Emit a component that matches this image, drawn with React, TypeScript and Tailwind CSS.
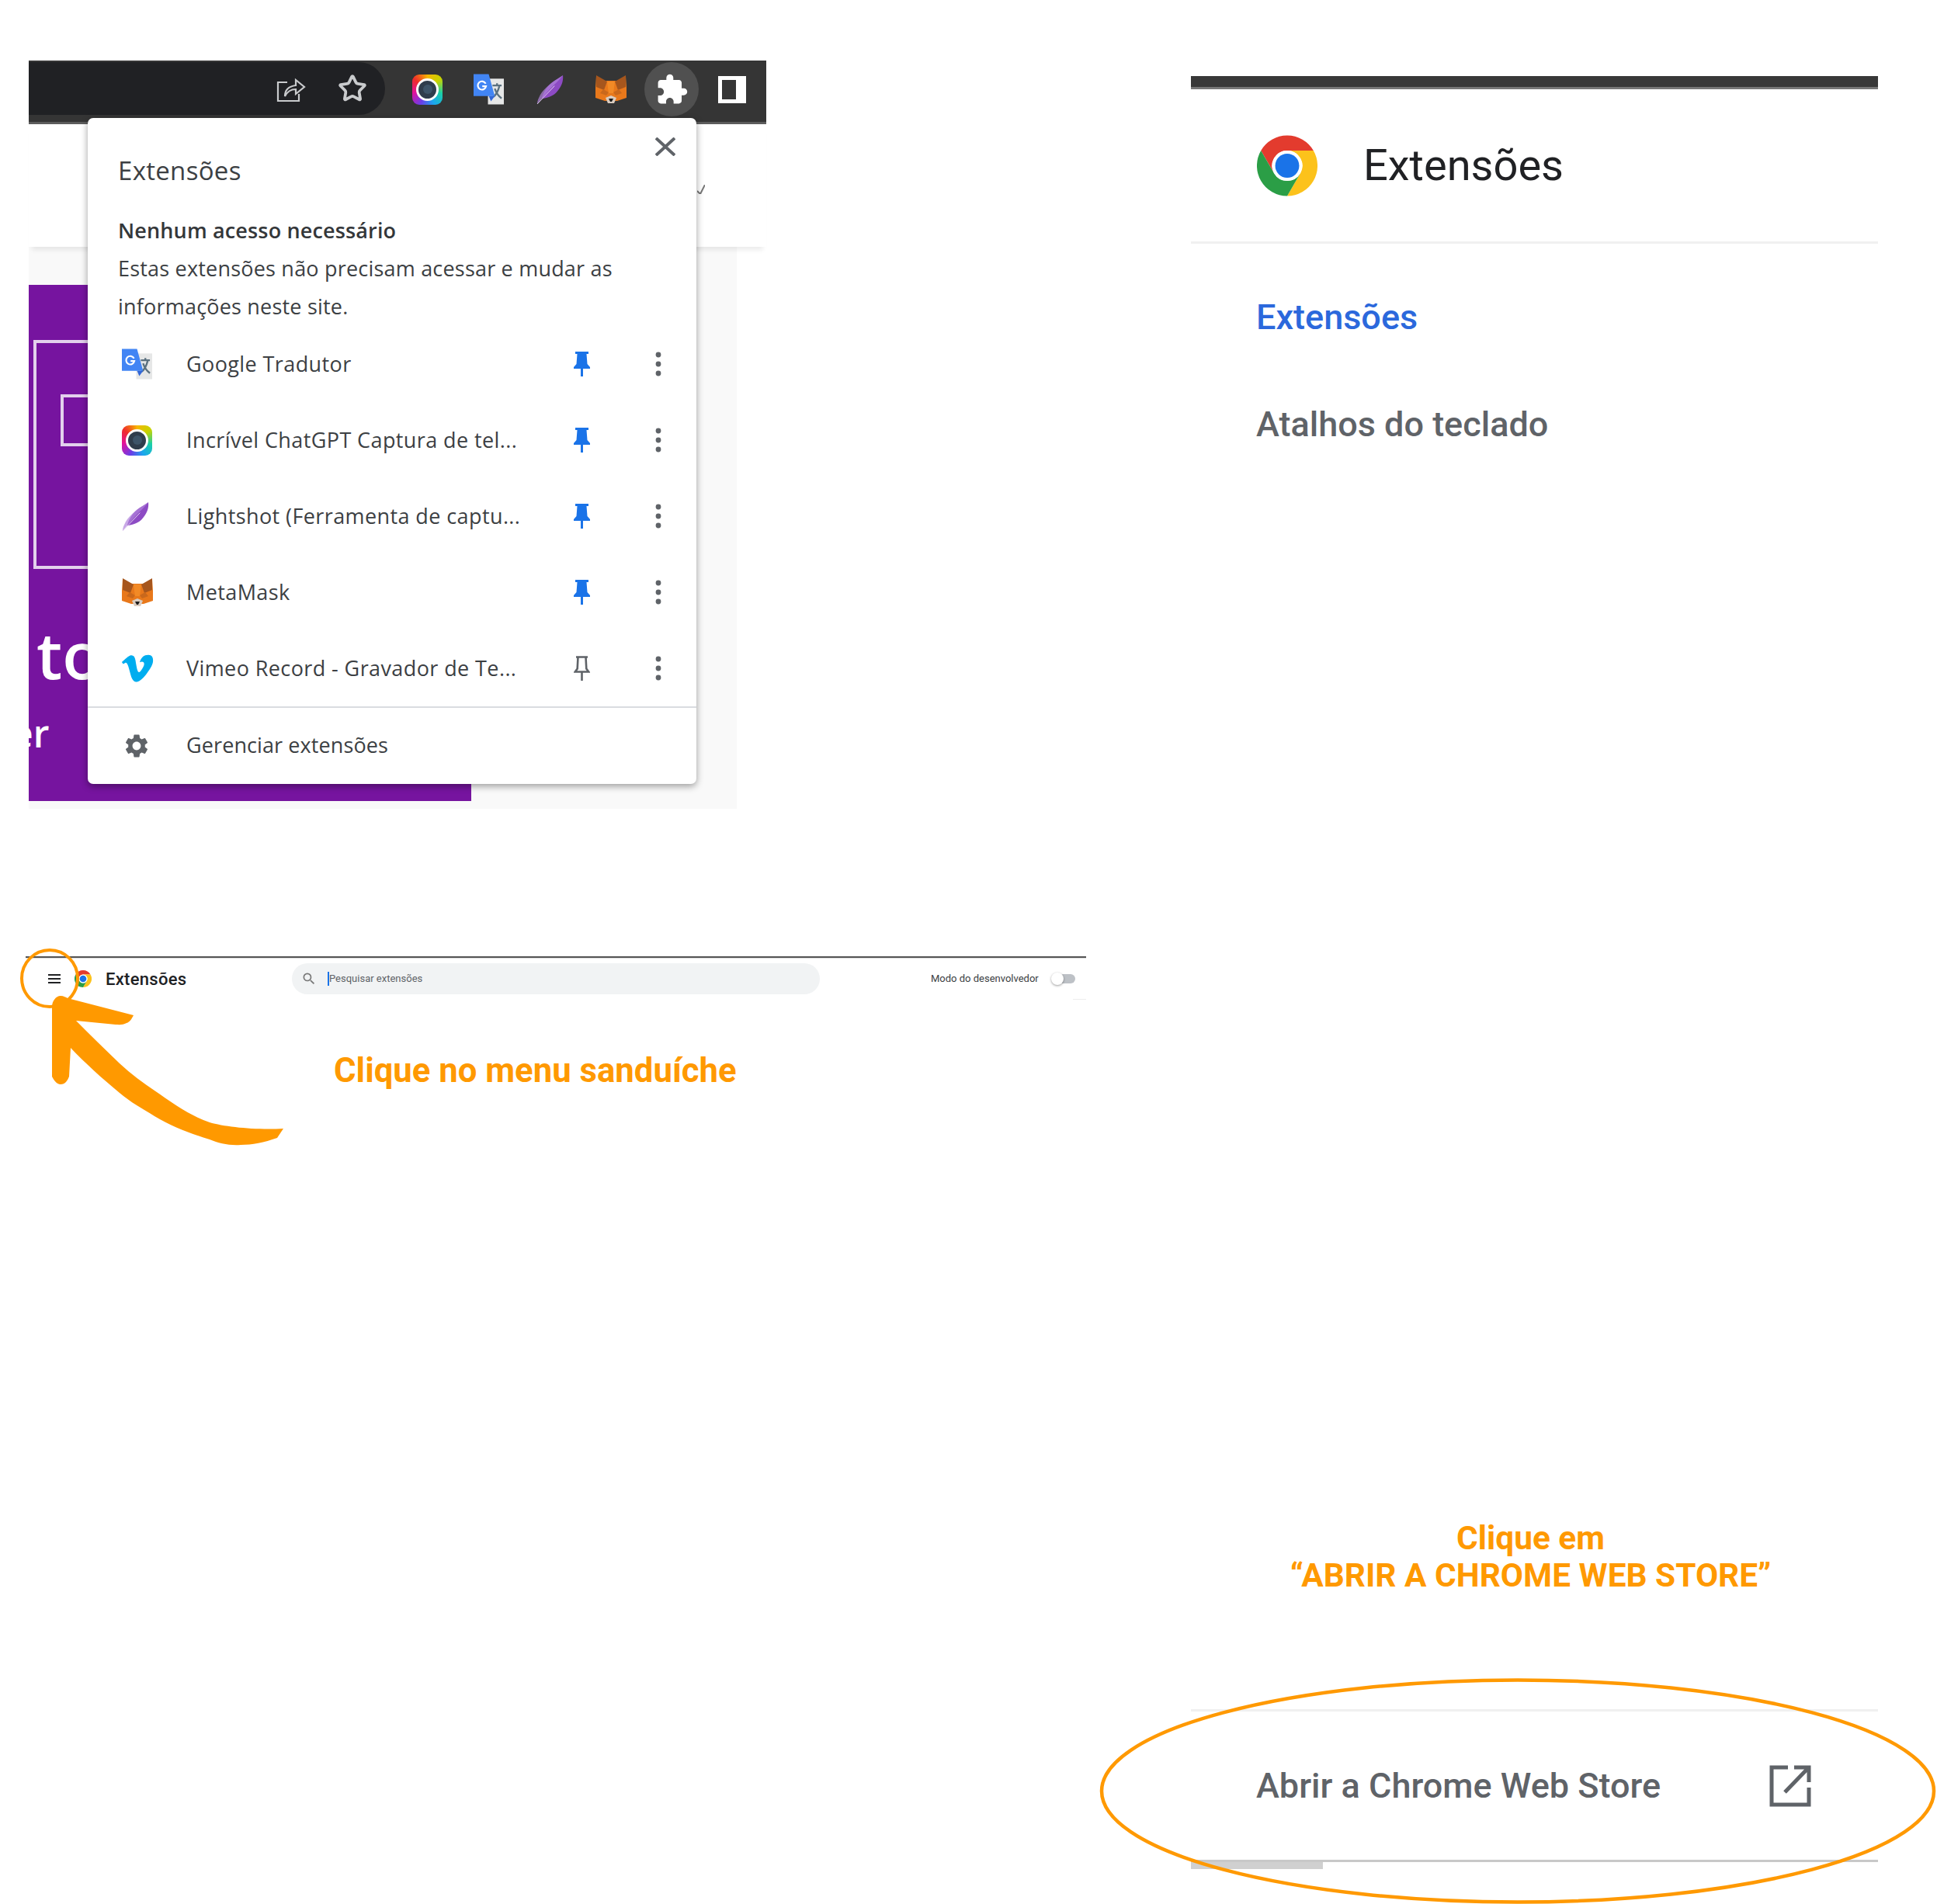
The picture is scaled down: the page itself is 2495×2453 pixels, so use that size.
import React from "react";
import { FaVimeoV } from "react-icons/fa";
import { MdExtension, MdSearch, MdSettings } from "react-icons/md";
import { Star } from "lucide-react";

const POPUP_FONT = "font-['Open_Sans',sans-serif]";
const ROBOTO = "font-['Roboto',sans-serif]";

const ChromeLogo: React.FC<{ className: string }> = ({ className }) => (
  <svg viewBox="0 0 48 48" className={className}>
    <path fill="#e33b2e" d="M24 0A24 24 0 0 0 3.2 12L13.6 30A12 12 0 0 1 24 12H44.8A24 24 0 0 0 24 0Z" />
    <path fill="#fcc21b" d="M44.8 12H24A12 12 0 0 1 34.4 30L24 48A24 24 0 0 0 44.8 12Z" />
    <path fill="#2b9e46" d="M3.2 12A24 24 0 0 0 24 48L34.4 30A12 12 0 0 1 13.6 30Z" />
    <circle cx="24" cy="24" r="12" fill="#fff" />
    <circle cx="24" cy="24" r="9.5" fill="#1a73e8" />
  </svg>
);

const CameraIcon = () => (
  <div className="w-[39px] h-[39px] shrink-0 rounded-[9px] blur-[0.5px] flex items-center justify-center bg-[conic-gradient(#f7b500,#c6d300,#1bd1a5,#1aa7ee,#6a3de8,#e3119b,#ef2b2b,#f7b500)]">
    <div className="w-[29px] h-[29px] rounded-full bg-[#2f3d4c] border-[3px] border-white flex items-center justify-center">
      <div className="w-[12px] h-[12px] rounded-full bg-[#3d5468]" />
    </div>
  </div>
);

const TranslateIcon = () => (
  <svg viewBox="0 0 40 40" className="w-[39px] h-[40px] shrink-0 blur-[0.5px]">
    <rect x="19" y="6" width="21" height="34" fill="#e6e7e7" />
    <path d="M25 15H37M31 12V16M34 16C32 24 29 28 26 30M28 19C30 25 33 29 37 32" fill="none" stroke="#5b7180" strokeWidth="2.4" />
    <path fill="#4285f4" d="M0 0H20L28 29H0Z" />
    <path fill="#3367d6" d="M20 29H28L23 36Z" />
    <path d="M16 12.5A5.5 5.5 0 1 0 16.5 16H11.5" fill="none" stroke="#fff" strokeWidth="2.2" />
  </svg>
);

const FeatherIcon = () => (
  <svg viewBox="0 0 36 40" className="w-[35px] h-[39px] shrink-0 blur-[0.4px]">
    <path fill="#8d4bc4" d="M35 1C36 9 33 17 26 24C20 30 11 31 7 32C9 24 13 17 20 11C25 7 31 5 35 1Z" />
    <path fill="#b183dc" d="M35 1C30 8 20 16 7 32L1 39C1 35 3 31 5 27C10 18 22 9 35 1Z" opacity="0.7" />
    <path d="M1 39L24 15" stroke="#e4d3f2" strokeWidth="1" />
  </svg>
);

const FoxIcon = () => (
  <svg viewBox="0 0 40 38" className="w-[40px] h-[38px] shrink-0 blur-[0.5px]">
    <path fill="#e8781b" d="M1 2L10 8H30L39 2L40 17V30L28 34H12L0 30V17Z" />
    <path fill="#a6561d" d="M1 1L15 9L11 20L1 16ZM39 1L25 9L29 20L39 16Z" />
    <path fill="#c9681c" d="M10 19L17 23L14 27L6 24ZM30 19L23 23L26 27L34 24Z" />
    <path fill="#f28a26" d="M15 9H25L23 24H17Z" />
    <path fill="#d9cbbf" d="M13 30L20 27L27 30L24 37H16Z" />
    <path fill="#1d1d1d" d="M17 31H23L21 35H19Z" />
  </svg>
);

const PinIcon: React.FC<{ pinned: boolean }> = ({ pinned }) => (
  <svg viewBox="0 0 21 32" className="w-[21px] h-[32px]">
    {pinned ? (
      <path fill="#1a73e8" d="M2 0H19V3H16.5L17.5 16L21 20V22H12V32H9V22H0V20L3.5 16L4.5 3H2Z" />
    ) : (
      <path fill="none" stroke="#5f6368" strokeWidth="2.6" d="M3 1.5H18M5.5 1.5L4.7 16.5L1.8 20.5H19.2L16.3 16.5L15.5 1.5M10.5 20.5V32" />
    )}
  </svg>
);

const DotsIcon = () => (
  <svg viewBox="0 0 8 32" className="w-[8px] h-[32px]">
    <circle cx="4" cy="4" r="3.4" fill="#5f6368" />
    <circle cx="4" cy="16" r="3.4" fill="#5f6368" />
    <circle cx="4" cy="28" r="3.4" fill="#5f6368" />
  </svg>
);

const EXTENSIONS = [
  { name: "Google Tradutor", icon: <TranslateIcon />, pinned: true },
  { name: "Incrível ChatGPT Captura de tel...", icon: <CameraIcon />, pinned: true },
  { name: "Lightshot (Ferramenta de captu...", icon: <FeatherIcon />, pinned: true },
  { name: "MetaMask", icon: <FoxIcon />, pinned: true },
  {
    name: "Vimeo Record - Gravador de Te...",
    icon: <FaVimeoV className="w-[46px] h-[46px] -ml-[3px] shrink-0 text-[#00adef]" />,
    pinned: false,
  },
];

const Toolbar = () => (
  <div className="h-[82px] w-[950px] bg-[#353535] border-b-[3px] border-[#5c5c5c] flex items-start">
    <div className="w-[459px] h-[68px] mt-[2px] bg-[#202124] rounded-r-[34px] flex items-center justify-end gap-[41px] pr-[23px] shrink-0">
      <svg viewBox="0 0 38 34" className="w-[38px] h-[34px]" fill="none" stroke="#c9cbcd" strokeWidth="2.2">
        <path d="M14 9H2V33H29V24" />
        <path d="M11 27C11 18 17 14 25 13V6L36 15L25 24V18C19 18 14 21 11 27Z" />
      </svg>
      <Star className="w-[38px] h-[38px] text-[#c9cbcd]" strokeWidth={2.4} />
    </div>
    <div className="flex items-center h-[72px] mt-[1px]">
      <div className="ml-[35px]"><CameraIcon /></div>
      <div className="ml-[40px]"><TranslateIcon /></div>
      <div className="ml-[42px]"><FeatherIcon /></div>
      <div className="ml-[41px]"><FoxIcon /></div>
      <div className="ml-[23px] w-[70px] h-[70px] rounded-full bg-[#505050] flex items-center justify-center">
        <MdExtension className="w-[43px] h-[43px] text-white" />
      </div>
      <div className="ml-[25px] w-[36px] h-[35px] border-[5px] border-r-[13px] border-white" />
    </div>
  </div>
);

const ExtensionsPopup = () => (
  <div
    className={`absolute left-[76px] top-[74px] w-[784px] h-[858px] bg-white rounded-[7px] shadow-[0_3px_10px_rgba(0,0,0,0.38)] text-[#3c4043] ${POPUP_FONT}`}
  >
    <svg viewBox="0 0 26 24" className="absolute right-[27px] top-[25px] w-[26px] h-[24px]" stroke="#5f6368" strokeWidth="4">
      <path d="M1 1L25 23M25 1L1 23" />
    </svg>
    <div className="pl-[39px] pt-[46px]">
      <div className="text-[33px] leading-[44px] tracking-[0.3px]">Extensões</div>
      <div className="mt-[30px] text-[27px] leading-[49px] font-semibold tracking-[0.15px] text-[#34373a]">Nenhum acesso necessário</div>
      <div className="text-[27px] leading-[49px] tracking-[0.2px]">
        Estas extensões não precisam acessar e mudar as
        <br />
        informações neste site.
      </div>
    </div>
    <div className="mt-[1px]">
      {EXTENSIONS.map((ext) => (
        <div key={ext.name} className="h-[98px] flex items-center">
          <div className="ml-[44px] w-[83px] flex items-center">{ext.icon}</div>
          <div className="w-[499px] text-[27px] tracking-[0.4px] whitespace-nowrap">{ext.name}</div>
          <PinIcon pinned={ext.pinned} />
          <div className="ml-[84px]"><DotsIcon /></div>
        </div>
      ))}
    </div>
    <div className="h-[2px] bg-[#dadce0]" />
    <div className="h-[97px] flex items-center">
      <div className="ml-[45px] w-[82px]"><MdSettings className="w-[36px] h-[36px] text-[#5f6368]" /></div>
      <div className="text-[27px] tracking-[0.1px]">Gerenciar extensões</div>
    </div>
  </div>
);

const FirstShot = () => (
  <div className="relative w-[950px] h-[964px]">
    <Toolbar />
    <div className="relative h-[158px] w-[950px] bg-white shadow-[0_8px_6px_-4px_rgba(0,0,0,0.08)]">
      <svg viewBox="0 0 10 12" className="absolute left-[861px] top-[78px] w-[10px] h-[12px]">
        <path d="M0 8L4 12L10 0" fill="none" stroke="#777" strokeWidth="2" />
      </svg>
    </div>
    <div className="w-[912px] h-[724px] pt-[49px] bg-[#f9f9f9]">
      <div className="w-[570px] h-[665px] bg-[#76149f] overflow-hidden font-['Open_Sans',sans-serif] text-white">
        <div className="ml-[6px] mt-[71px] w-[200px] h-[295px] pt-[66px] pl-[31px] border-[4px] border-[#e3d0ec]">
          <div className="w-[120px] h-[67px] border-[4px] border-[#e3d0ec]" />
        </div>
        <div className="ml-[10px] mt-[60px] text-[84px] leading-[100px] font-semibold">to</div>
        <div className="-ml-[22px] mt-[22px] text-[48px] leading-[60px] font-semibold">er</div>
      </div>
    </div>
    <ExtensionsPopup />
  </div>
);

const SecondShot = () => (
  <div className={`w-[1366px] -ml-[4px] mt-[190px] ${ROBOTO}`}>
    <div className="h-[2px] bg-[#555]" />
    <div className="h-[1px] bg-[#ddd]" />
    <div className="h-[52px] flex items-center">
      <div className="ml-[29px] w-[16px] h-[12px] flex flex-col justify-between">
        <div className="h-[2px] bg-[#202124]" />
        <div className="h-[2px] bg-[#202124]" />
        <div className="h-[2px] bg-[#202124]" />
      </div>
      <ChromeLogo className="ml-[18px] w-[22px] h-[22px]" />
      <div className="ml-[18px] w-[240px] text-[22px] tracking-[0.3px] font-medium text-[#202124]">Extensões</div>
      <div className="w-[680px] h-[40px] rounded-full bg-[#f1f3f4] flex items-center pl-[12px] text-[#5f6368]">
        <MdSearch className="w-[20px] h-[20px] text-[#777]" />
        <div className="ml-[14px] w-[2px] h-[18px] bg-[#1a73e8]" />
        <span className="text-[13px]">Pesquisar extensões</span>
      </div>
      <div className="ml-[143px] text-[13px] text-[#3c4043]">Modo do desenvolvedor</div>
      <div className="relative ml-[16px] w-[31px] h-[12px] rounded-full">
        <div className="ml-[8px] h-[12px] rounded-full bg-[#bdc1c6]" />
        <div className="absolute left-0 -top-[2px] w-[16px] h-[16px] rounded-full bg-white shadow-[0_1px_3px_rgba(0,0,0,0.4)]" />
      </div>
    </div>
    <div className="ml-auto w-[17px] h-[1px] bg-[#eee]" />
    <div className="ml-[397px] mt-[66px] text-[43.7px] leading-[50px] font-bold text-[#ff9900]">
      Clique no menu sanduíche
    </div>
  </div>
);

const RightColumn = () => (
  <div className={`w-[885px] pt-[98px] flex flex-col ${ROBOTO}`}>
    <div className="h-[17px] bg-[#383838] border-b-[3px] border-[#777]" />
    <div className="h-[196px] flex items-center pl-[85px]">
      <ChromeLogo className="w-[78px] h-[81px]" />
      <div className="ml-[59px] text-[56px] text-[#202124]">Extensões</div>
    </div>
    <div className="h-[3px] bg-[#f0f0f0]" />
    <div className="pl-[84px] pt-[65px] text-[45px] font-medium leading-[60px] text-[#5f6368]">
      <div className="text-[#2b68dc]">Extensões</div>
      <div className="mt-[78px]">Atalhos do teclado</div>
    </div>
    <div className="mt-[1381px] text-center ml-[-10px] text-[42.4px] leading-[48px] font-bold text-[#ff9900]">
      Clique em
      <br />
      “ABRIR A CHROME WEB STORE”
    </div>
    <div className="mt-[148px] h-[3px] bg-[#f0f0f0]" />
    <div className="h-[191px] flex items-center pl-[84px] pr-[86px] justify-between text-[45px] font-medium text-[#5f6368]">
      <span>Abrir a Chrome Web Store</span>
      <svg viewBox="0 0 54 55" className="w-[54px] h-[55px]" fill="none" stroke="#5f6368" strokeWidth="5">
        <path d="M24 4H3V52H51V30" />
        <path d="M20 36L49 6M32 4H51V23" />
      </svg>
    </div>
    <div className="h-[3px] bg-[#c8c8c8]" />
    <div className="w-[170px] h-[9px] bg-[#d0d0d0]" />
  </div>
);

const App: React.FC = () => {
  return (
    <div className="relative w-[2495px] h-[2453px] bg-white overflow-hidden flex">
      <div className="w-[1534px] shrink-0 pl-[37px] pt-[78px]">
        <FirstShot />
        <SecondShot />
      </div>
      <RightColumn />
      {/* orange annotations over the screenshots */}
      <svg viewBox="0 0 2495 2453" className="absolute inset-0 w-[2495px] h-[2453px] pointer-events-none">
        <ellipse cx="64" cy="1260.5" rx="36" ry="36.5" fill="none" stroke="#ff9900" strokeWidth="4" />
        <ellipse cx="1955" cy="2307.5" rx="536" ry="143" fill="none" stroke="#ff9900" strokeWidth="4.5" />
        <path
          fill="#ff9900"
          d="M67 1297C67 1290 72 1283 78 1283C82 1283 85 1285 87 1286L172 1308C170 1312 167 1317 163 1318C158 1321 152 1320 149 1320L98 1315C116 1333 135 1352 154 1370C169 1384 184 1395 199 1405C222 1421 246 1438 270 1446C290 1452 330 1456 365 1454L357 1466C340 1472 325 1475 310 1475C295 1476 282 1473 270 1468C245 1460 222 1452 199 1438C183 1428 168 1420 154 1408C130 1388 110 1370 91 1350L89 1387C87 1392 84 1397 78 1397C73 1397 69 1391 67 1387Z"
        />
      </svg>
    </div>
  );
};

export default App;
